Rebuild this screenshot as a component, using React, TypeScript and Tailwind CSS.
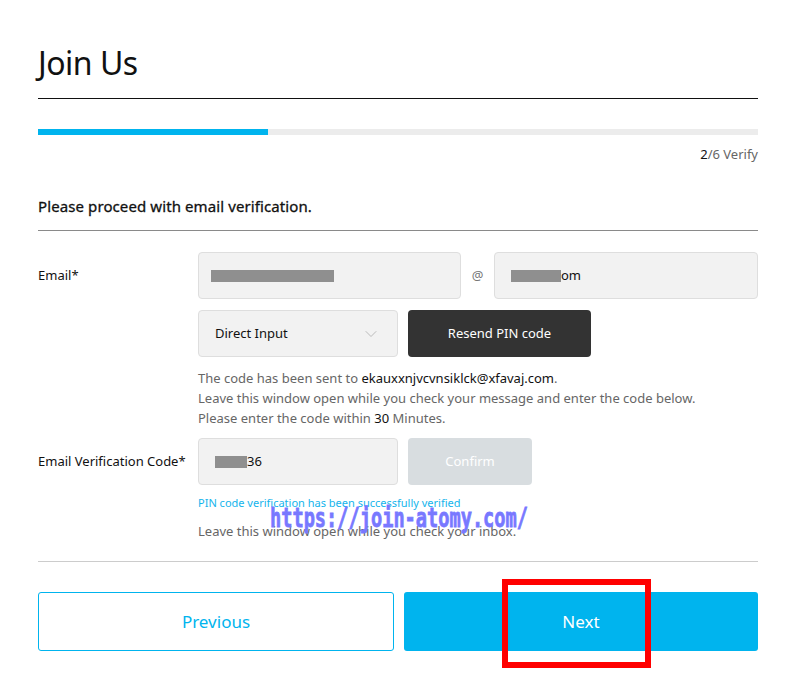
import { ChevronDown } from 'lucide-react';

const font = { fontFamily: '"Noto Sans", "Open Sans", sans-serif' };

function Field({ children, className = '' }: { children: React.ReactNode; className?: string }) {
  return (
    <div
      className={`h-[47px] flex items-center px-4 bg-[#f2f2f2] border border-[#dedede] rounded text-[13px] text-[#111] ${className}`}
    >
      {children}
    </div>
  );
}

function Masked({ w }: { w: number }) {
  return <span className="inline-block h-[12px] bg-[#8f8f8f] align-middle" style={{ width: w }} />;
}

export default function App() {
  return (
    <main className="min-h-screen bg-white" style={font}>
      <div className="relative px-[38px] pt-[41px] w-[796px]">
        {/* Header */}
        <h1 className="text-[32px] leading-[44px] text-[#111] tracking-[-0.5px]">Join Us</h1>
        <div className="mt-[13px] h-px bg-[#111]" />

        {/* Progress */}
        <div className="mt-[30px] h-[6px] bg-[#ececec]">
          <div className="h-full w-[230px] bg-[#00b4ee]" />
        </div>
        <p className="mt-[10px] text-right text-[13px] text-[#666]">
          <span className="text-[#111]">2</span>/6 Verify
        </p>

        <h2 className="mt-[30px] text-[15px] tracking-[0.1px] text-[#111] [-webkit-text-stroke:0.3px_#111]">
          Please proceed with email verification.
        </h2>
        <div className="mt-[13px] h-px bg-[#8a8a8a]" />

        {/* Email */}
        <div className="mt-[21px] flex">
          <div className="w-[160px] pt-[14px] text-[13px] text-[#111]">Email*</div>
          <div className="flex-1">
            <div className="flex items-center">
              <Field className="w-[263px]">
                <span className="ml-[-4px]"><Masked w={123} /></span>
              </Field>
              <span className="w-[33px] text-center text-[13px] text-[#777]">@</span>
              <Field className="flex-1">
                <Masked w={50} />
                <span>om</span>
              </Field>
            </div>
            <div className="mt-[11px] flex gap-[10px]">
              <Field className="w-[200px] justify-between">
                <span>Direct Input</span>
                <ChevronDown className="w-5 h-5 text-[#bbb]" strokeWidth={1.2} />
              </Field>
              <button className="w-[183px] h-[47px] rounded bg-[#333] text-white text-[13px]">
                Resend PIN code
              </button>
            </div>
            <div className="mt-[11px] text-[13px] leading-[20px] text-[#666]">
              <p>
                The code has been sent to <span className="text-[#111]">ekauxxnjvcvnsiklck@xfavaj.com</span>.
              </p>
              <p>Leave this window open while you check your message and enter the code below.</p>
              <p>
                Please enter the code within <span className="text-[#111]">30</span> Minutes.
              </p>
            </div>
          </div>
        </div>

        {/* Verification code */}
        <div className="mt-[10px] flex">
          <div className="w-[160px] pt-[14px] text-[13px] text-[#111]">Email Verification Code*</div>
          <div className="flex-1">
            <div className="flex gap-[10px]">
              <Field className="w-[200px]">
                <Masked w={32} />
                <span>36</span>
              </Field>
              <button className="w-[124px] h-[47px] rounded bg-[#d8dde0] text-white text-[13px]">
                Confirm
              </button>
            </div>
            <p className="mt-[10px] text-[11px] leading-[16px] text-[#14b4ec]">
              PIN code verification has been successfully verified
            </p>
            <p className="mt-[10px] text-[13px] leading-[20px] text-[#666]">
              Leave this window open while you check your inbox.
            </p>
          </div>
        </div>

        <div className="mt-[20px] h-px bg-[#cccccc]" />

        {/* Actions */}
        <div className="mt-[30px] flex gap-[10px]">
          <button className="flex-1 h-[59px] rounded-[3px] border border-[#00b4ee] text-[#00b4ee] text-[17px] bg-white">
            Previous
          </button>
          <button className="flex-1 h-[59px] rounded-[3px] bg-[#00b4ee] text-white text-[17px]">
            Next
          </button>
        </div>

        {/* Watermark overlay */}
        <div
          className="absolute left-[270px] top-[502px] text-[27px] leading-[32px] font-bold text-[#7878ff] origin-left scale-x-[0.69] whitespace-nowrap pointer-events-none [-webkit-text-stroke:0.8px_#7878ff]"
          style={{ fontFamily: '"DejaVu Sans Mono", monospace' }}
        >
          https://join-atomy.com/
        </div>

        {/* Highlight box */}
        <div className="absolute left-[502px] top-[579px] w-[149px] h-[89px] border-[6px] border-[#ff0000] pointer-events-none" />
      </div>
    </main>
  );
}
